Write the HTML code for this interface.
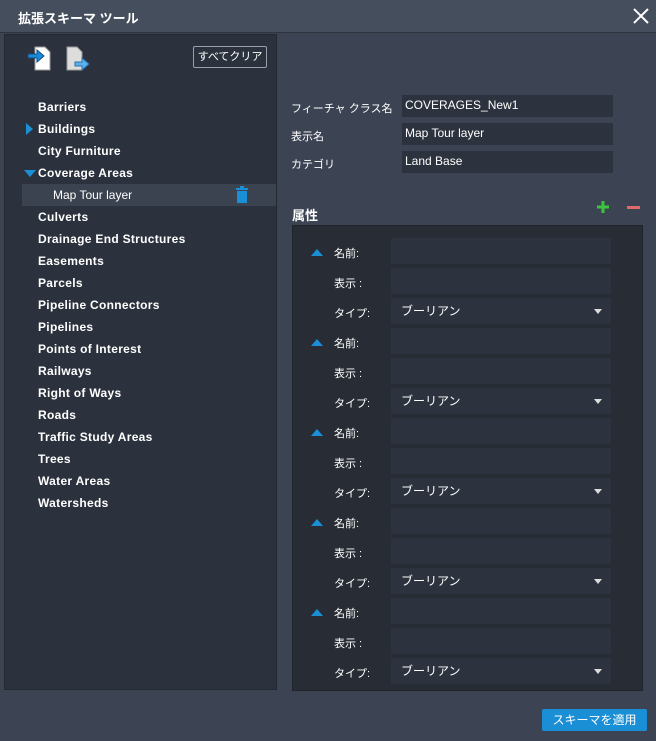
<!DOCTYPE html>
<html><head><meta charset="utf-8"><style>
*{margin:0;padding:0;box-sizing:border-box}
body{width:656px;height:741px;background:#3c4453;font-family:"Liberation Sans","Noto Sans CJK JP",sans-serif;color:#fff;position:relative;overflow:hidden;font-size:12px}
.abs{position:absolute}
.title{left:0;top:0;width:656px;height:33px;background:#454e5d;border-bottom:1px solid #2e343e}
.left{left:4px;top:34px;width:273px;height:656px;background:#2c323d;border:1px solid #232831}
.item{position:absolute;left:33px;font-weight:bold;font-size:12px;letter-spacing:0.3px}
.inp{position:absolute;background:#2d333e;font-size:12px;padding-left:3px;line-height:21px}
.lbl{position:absolute;font-size:11px}
.box{left:292px;top:225px;width:351px;height:466px;background:#272c35;border:1px solid #1f232a}
.tri{position:absolute;width:0;height:0;border-left:6px solid transparent;border-right:6px solid transparent;border-bottom:7px solid #1b8fd6}
.dd{position:absolute;width:0;height:0;border-left:4px solid transparent;border-right:4px solid transparent;border-top:5px solid #ddd}
</style></head><body>
<div class="abs title"><div class="abs" style="left:18px;top:8px;font-weight:bold;font-size:13px">拡張スキーマ ツール</div>
<svg class="abs" style="left:632px;top:7px" width="18" height="18"><path d="M2 2L16 16M16 2L2 16" stroke="#fff" stroke-width="2"/></svg></div>
<div class="abs left">
<svg class="abs" style="left:22px;top:10px" width="26" height="26"><path d="M8 2h10l5 5v18H8z" fill="#fff" stroke="#999"/><path d="M1 9h9v-4l7 6-7 6v-4H1z" fill="#1e88d8" stroke="#0b4f8a"/></svg>
<svg class="abs" style="left:60px;top:10px" width="28" height="28"><path d="M2 2h10l5 5v18H2z" fill="#ddd" stroke="#999"/><path d="M10 17h7v-4l7 6-7 6v-4h-7z" fill="#5ab0ea" stroke="#2a6fa8"/></svg>
<div class="abs" style="left:188px;top:11px;width:74px;height:22px;border:1px solid #9aa0a8;border-radius:2px;font-size:11px;text-align:center;line-height:20px">すべてクリア</div>
<div class="item" style="top:65px">Barriers</div>
<div class="abs" style="left:21px;top:88px;border-top:6px solid transparent;border-bottom:6px solid transparent;border-left:7px solid #1b8fd6"></div>
<div class="item" style="top:87px">Buildings</div>
<div class="item" style="top:109px">City Furniture</div>
<div class="abs" style="left:19px;top:135px;border-left:6px solid transparent;border-right:6px solid transparent;border-top:7px solid #1b8fd6"></div>
<div class="item" style="top:131px">Coverage Areas</div>
<div class="abs" style="left:17px;top:149px;width:254px;height:22px;background:#3b4350"></div>
<div class="abs" style="left:48px;top:153px;font-size:12px">Map Tour layer</div>
<svg class="abs" style="left:230px;top:151px" width="14" height="18"><rect x="1" y="2" width="12" height="2" fill="#1b8fd6"/><rect x="5" y="0" width="4" height="2" fill="#1b8fd6"/><rect x="2" y="5" width="10" height="12" fill="#1b8fd6"/></svg>
<div class="item" style="top:175px">Culverts</div>
<div class="item" style="top:197px">Drainage End Structures</div>
<div class="item" style="top:219px">Easements</div>
<div class="item" style="top:241px">Parcels</div>
<div class="item" style="top:263px">Pipeline Connectors</div>
<div class="item" style="top:285px">Pipelines</div>
<div class="item" style="top:307px">Points of Interest</div>
<div class="item" style="top:329px">Railways</div>
<div class="item" style="top:351px">Right of Ways</div>
<div class="item" style="top:373px">Roads</div>
<div class="item" style="top:395px">Traffic Study Areas</div>
<div class="item" style="top:417px">Trees</div>
<div class="item" style="top:439px">Water Areas</div>
<div class="item" style="top:461px">Watersheds</div>
</div>
<div class="lbl" style="left:291px;top:100px">フィーチャ クラス名</div>
<div class="lbl" style="left:291px;top:128px">表示名</div>
<div class="lbl" style="left:291px;top:156px">カテゴリ</div>
<div class="inp" style="left:402px;top:95px;width:211px;height:22px">COVERAGES_New1</div>
<div class="inp" style="left:402px;top:123px;width:211px;height:22px">Map Tour layer</div>
<div class="inp" style="left:402px;top:151px;width:211px;height:22px">Land Base</div>
<div class="lbl" style="left:292px;top:205px;font-weight:bold;font-size:13px">属性</div>
<svg class="abs" style="left:596px;top:200px" width="14" height="14"><path d="M7 1v12M1 7h12" stroke="#3cc43c" stroke-width="3"/></svg>
<div class="abs" style="left:627px;top:206px;width:13px;height:3px;background:#e06a6a"></div>
<div class="abs box"></div>
<div id="rows"></div>
<script>
let h='';for(let i=0;i<5;i++){let y=238+i*90;
h+=`<div class="tri" style="left:311px;top:${y+11}px"></div>
<div class="lbl" style="left:334px;top:${y+7}px">名前:</div>
<div class="lbl" style="left:334px;top:${y+37}px">表示 :</div>
<div class="lbl" style="left:334px;top:${y+67}px">タイプ:</div>
<div class="inp" style="left:391px;top:${y}px;width:220px;height:26px"></div>
<div class="inp" style="left:391px;top:${y+30}px;width:220px;height:26px"></div>
<div class="inp" style="left:391px;top:${y+60}px;width:220px;height:26px;padding-left:10px;line-height:26px">ブーリアン</div>
<div class="dd" style="left:594px;top:${y+71}px"></div>`;}
document.getElementById('rows').innerHTML=h;
</script>
<div class="abs" style="left:542px;top:709px;width:105px;height:22px;background:#1a8fd6;border-radius:2px;text-align:center;line-height:22px;font-size:12px">スキーマを適用</div>
</body></html>
